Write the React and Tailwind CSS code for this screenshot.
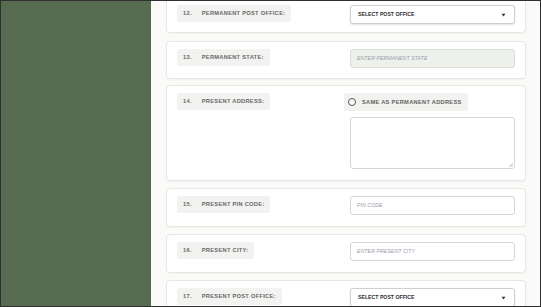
const font = { fontFamily: '"Liberation Sans", Arial, sans-serif' };

const Label = ({ num, text }) => (
  <div className="inline-flex h-[17px] w-fit items-center gap-[10px] rounded-[2px] bg-[#f2f2f0] px-[6px] text-[5.7px] font-bold tracking-[0.05em] text-[#686868]">
    <span>{num}.</span>
    <span>{text}</span>
  </div>
);

const Caret = () => (
  <svg width="5" height="4" viewBox="0 0 5 4" className="mr-[1px]">
    <path d="M0.5 0.8 L4.5 0.8 L2.5 3.4 Z" fill="#333" />
  </svg>
);

const SelectBox = ({ label }) => (
  <div className="flex h-[19px] items-center justify-between rounded-[3px] border border-[#cfcfcf] bg-white px-[7px] shadow-[0_1px_2px_rgba(0,0,0,0.12)]">
    <span className="text-[5.2px] font-semibold text-[#2e2e2e]">{label}</span>
    <Caret />
  </div>
);

const TextInput = ({ placeholder, disabled }) => (
  <div
    className={
      "flex h-[19px] items-center rounded-[3px] border px-[6px] text-[5.3px] italic text-[#9aa1ab] " +
      (disabled ? "border-[#d9dcd5] bg-[#eef0ec]" : "border-[#d6d6d6] bg-white")
    }
  >
    {placeholder}
  </div>
);

const Card = ({ children, className = "" }) => (
  <div
    className={
      "grid grid-cols-2 gap-x-2 rounded-[4px] border border-[#e7e7e4] bg-white px-[10px] pt-[7px] shadow-[0_1px_2px_rgba(0,0,0,0.04)] " +
      className
    }
  >
    {children}
  </div>
);

const rows = [
  { num: 15, text: "PRESENT PIN CODE:", field: <TextInput placeholder="PIN CODE" /> },
  { num: 16, text: "PRESENT CITY:", field: <TextInput placeholder="ENTER PRESENT CITY" /> },
  { num: 17, text: "PRESENT POST OFFICE:", field: <SelectBox label="SELECT POST OFFICE" /> },
];

export default function App() {
  return (
    <div
      style={font}
      className="flex h-[307px] w-[541px] overflow-hidden border border-[#2f2f2f] bg-[#fafaf9]"
    >
      <div className="w-[150px] shrink-0 bg-[#566b50]" />
      <div className="flex-1 pl-[15px] pr-[14px]">
        <div className="-mt-[4px] flex flex-col gap-[6px]">
          <Card className="pb-[8px]">
            <Label num={12} text="PERMANENT POST OFFICE:" />
            <SelectBox label="SELECT POST OFFICE" />
          </Card>
          <Card className="mt-[2px] pb-[10px]">
            <Label num={13} text="PERMANENT STATE:" />
            <TextInput placeholder="ENTER PERMANENT STATE" disabled />
          </Card>
          <Card className="pb-[11px]">
            <Label num={14} text="PRESENT ADDRESS:" />
            <div className="flex flex-col">
              <div className="-ml-[6px] inline-flex h-[18px] w-fit items-center gap-[6px] rounded-[2px] bg-[#f2f2f0] px-[4px] pr-[6px] text-[5.7px] font-bold tracking-[0.05em] text-[#5f635e]">
                <span className="h-[8px] w-[8px] rounded-full border border-[#555] bg-white" />
                <span>SAME AS PERMANENT ADDRESS</span>
              </div>
              <div className="relative mt-[6px] h-[52px] rounded-[3px] border border-[#d6d6d6] bg-white">
                <svg width="4" height="4" viewBox="0 0 4 4" className="absolute right-[1px] bottom-[1px]">
                  <path d="M0 4 L4 0 M2 4 L4 2" stroke="#999" strokeWidth="0.6" />
                </svg>
              </div>
            </div>
          </Card>
          {rows.map(({ num, text, field }) => (
            <Card key={num} className="mt-[1px] pb-[11px]">
              <Label num={num} text={text} />
              {field}
            </Card>
          ))}
        </div>
      </div>
    </div>
  );
}
